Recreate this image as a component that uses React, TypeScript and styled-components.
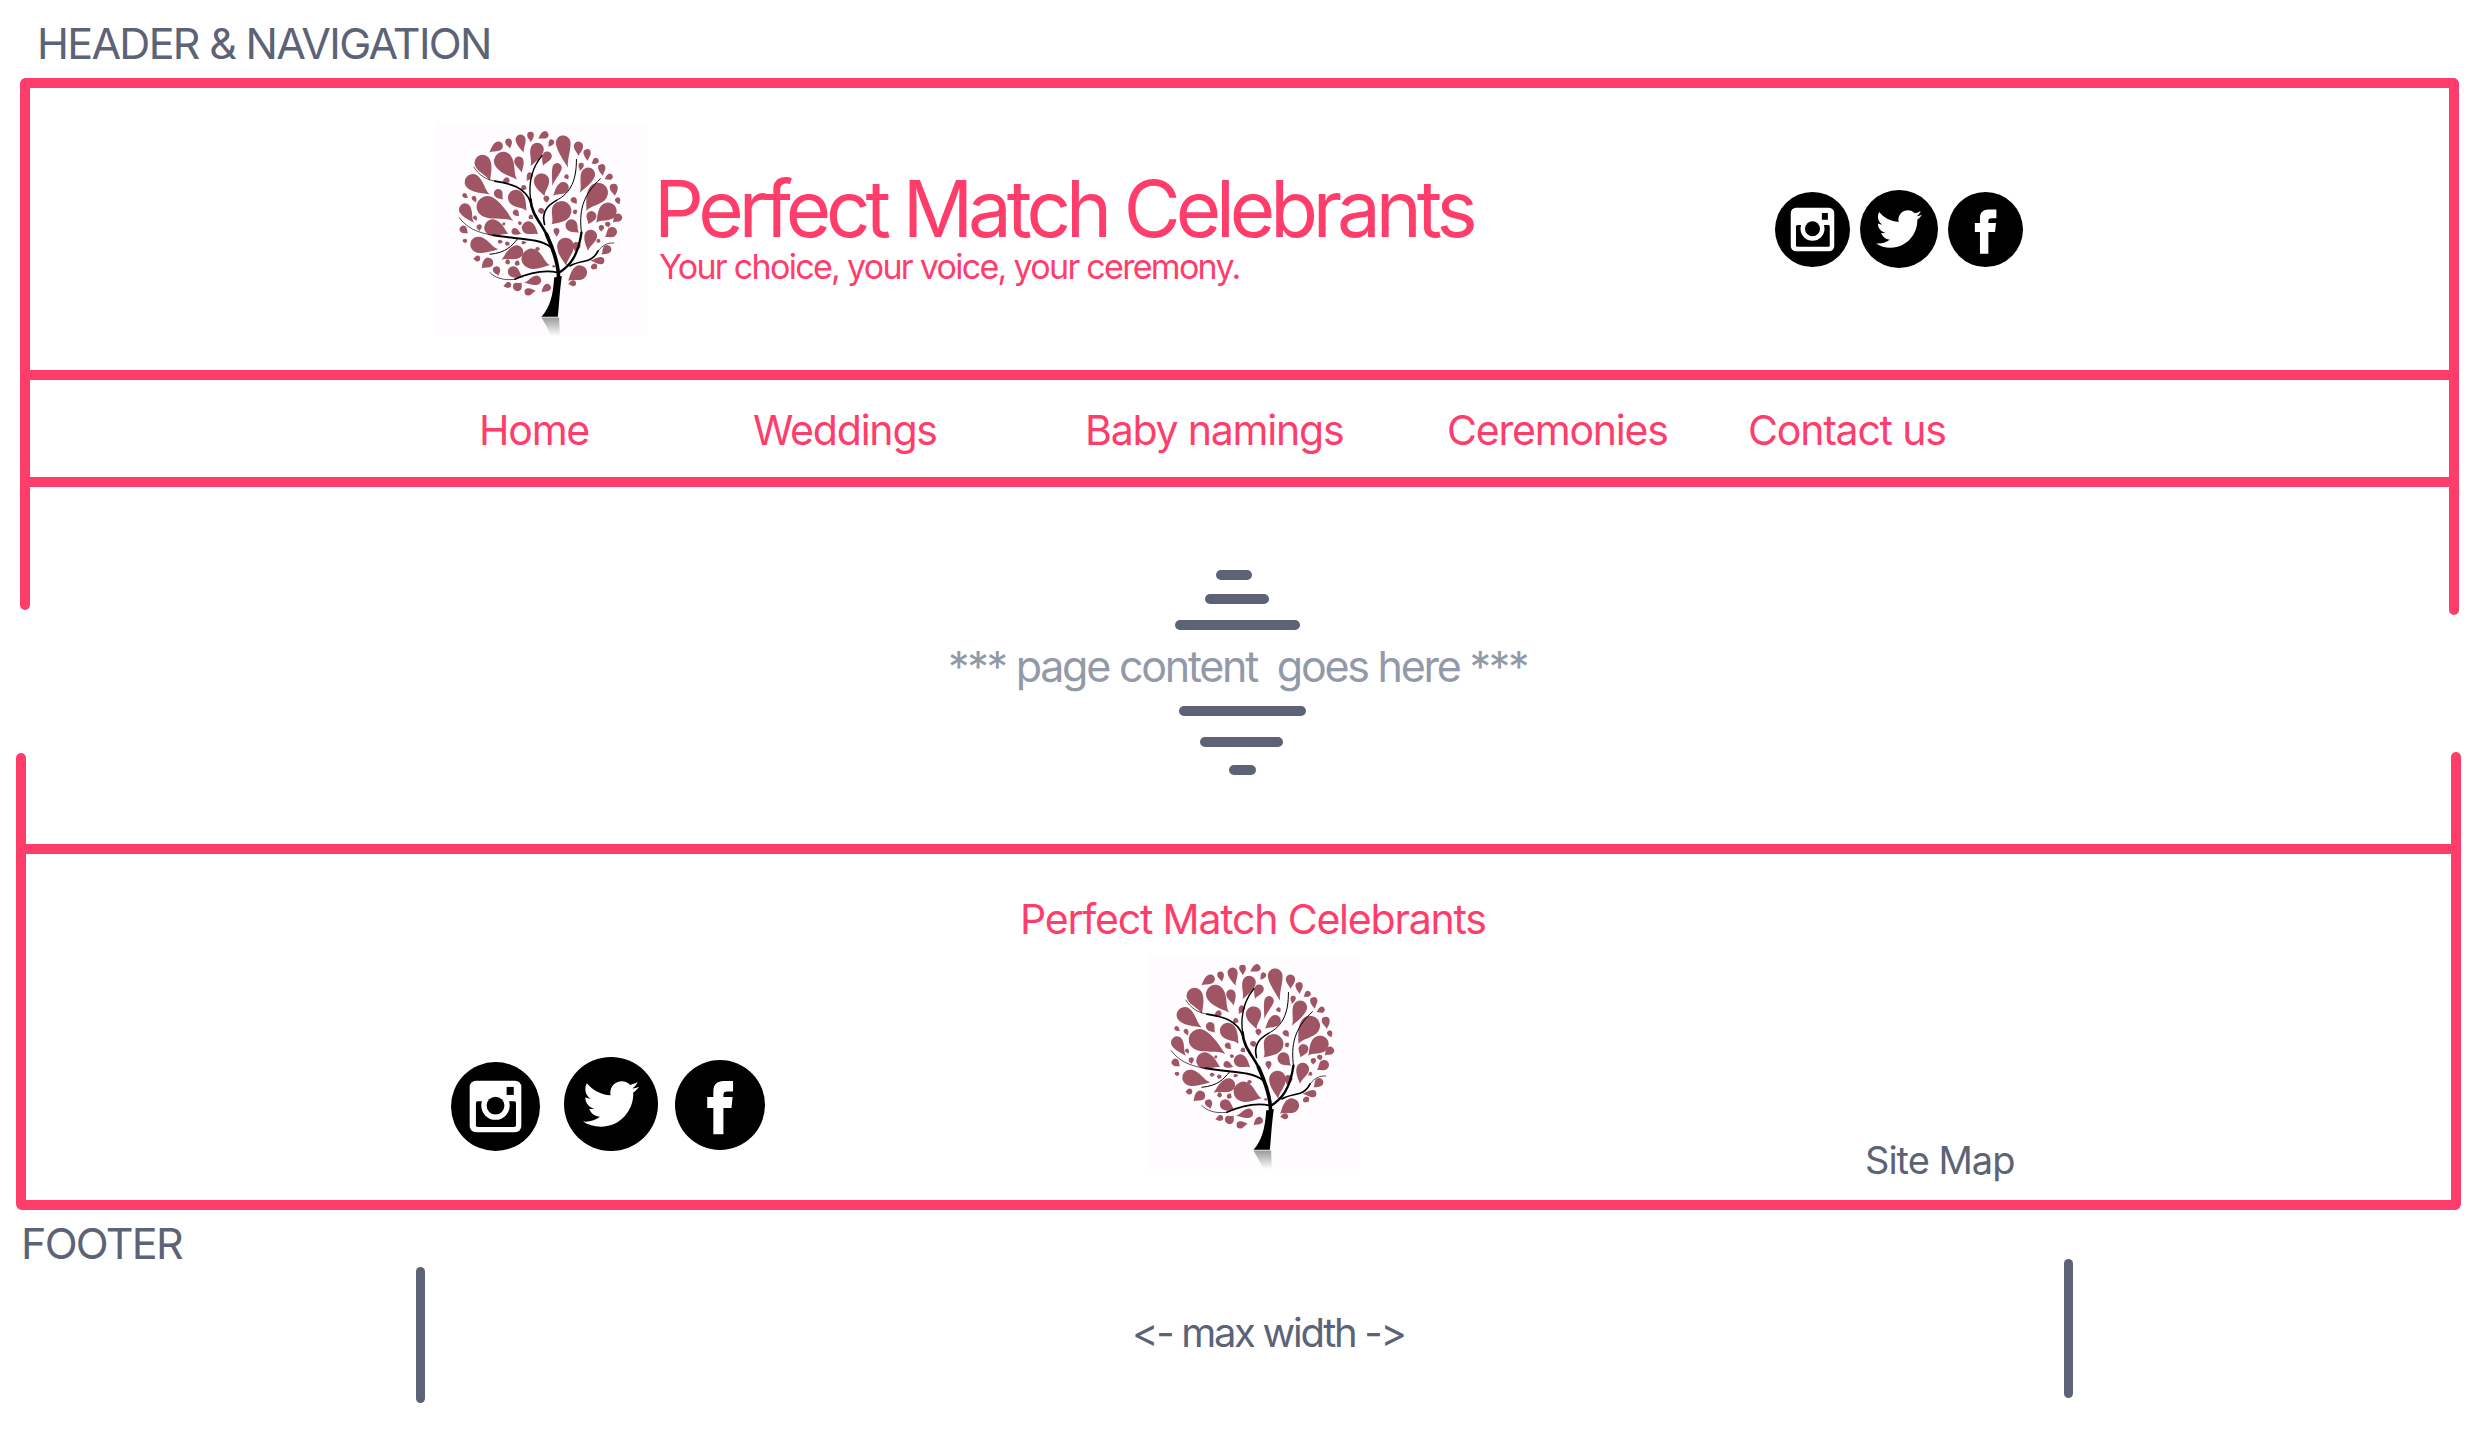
import React from "react";
import styled, { createGlobalStyle } from "styled-components";
import { FaTwitter } from "react-icons/fa";

const RED = "#ff3d6b";
const SLATE = "#5c6376";
const FONT = `Inter, "Liberation Sans", sans-serif`;

const Global = createGlobalStyle`
  html, body { margin: 0; padding: 0; background: #fff; }
  * { box-sizing: border-box; }
`;

const Page = styled.div`
  width: 2480px;
  height: 1438px;
  overflow: hidden;
  background: #fff;
  font-family: ${FONT};
`;

const SectionLabel = styled.div<{ $left: number; $height: number; $top: number }>`
  height: ${(p) => p.$height}px;
  padding: ${(p) => p.$top}px 0 0 ${(p) => p.$left}px;
  color: ${SLATE};
  font-size: 43px;
  line-height: 32px;
  letter-spacing: -1.7px;
`;

const HeaderFrame = styled.header`
  margin-left: 20px;
  width: 2439px;
  border: 10px solid ${RED};
  border-bottom: 0;
  border-radius: 6px 6px 0 0;
`;

const BrandRow = styled.div`
  height: 292px;
  display: flex;
  align-items: center;
  padding-left: 405px;
  border-bottom: 10px solid ${RED};
`;

const LogoBox = styled.div`
  width: 213px;
  height: 214px;
  flex: none;
  background: #fefcfe;
  svg { display: block; width: 100%; height: 100%; }
`;

const BrandText = styled.div`
  width: 1121px;
  margin: 3px 0 0 6px;
  flex: none;
`;

const BrandTitle = styled.h1`
  margin: 0;
  color: ${RED};
  font-size: 78px;
  font-weight: 400;
  line-height: 70px;
  letter-spacing: -5.1px;
  white-space: nowrap;
`;

const Tagline = styled.p`
  margin: 3px 0 0 5px;
  color: ${RED};
  font-size: 34px;
  line-height: 40px;
  letter-spacing: -1.7px;
  white-space: nowrap;
`;

const SocialRow = styled.div`
  display: flex;
  align-items: center;
`;

const Badge = styled.span<{ $size: number; $shift: number; $before: number }>`
  width: ${(p) => p.$size}px;
  height: ${(p) => p.$size}px;
  margin: ${(p) => p.$shift}px 0 0 ${(p) => p.$before}px;
  flex: none;
  display: flex;
  align-items: center;
  justify-content: center;
  border-radius: 50%;
  background: #000;
  color: #fff;
  svg { display: block; }
`;

const NavRow = styled.nav`
  height: 107px;
  display: grid;
  grid-template-columns: 274px 332px 362px 301px auto;
  align-items: center;
  padding: 2px 0 0 449px;
  border-bottom: 10px solid ${RED};
`;

const NavLink = styled.a`
  color: ${RED};
  font-size: 41px;
  line-height: 50px;
  letter-spacing: -1.2px;
`;

const Middle = styled.div`
  height: 357px;
  display: flex;
  justify-content: space-between;
`;

const EdgeColumn = styled.div<{ $margin: string }>`
  width: 10px;
  margin: ${(p) => p.$margin};
  display: flex;
  flex-direction: column;
  justify-content: space-between;
`;

const RedStub = styled.div<{ $height: number; $nudge: number; $round: "top" | "bottom" }>`
  width: 10px;
  height: ${(p) => p.$height}px;
  margin-left: ${(p) => p.$nudge}px;
  background: ${RED};
  border-radius: ${(p) => (p.$round === "bottom" ? "0 0 5px 5px" : "5px 5px 0 0")};
`;

const Center = styled.main`
  flex: 1;
  padding-top: 83px;
`;

const Dash = styled.div<{ $left: number; $width: number; $top: number }>`
  width: ${(p) => p.$width}px;
  height: 10px;
  margin: ${(p) => p.$top}px 0 0 ${(p) => p.$left - 26}px;
  background: ${SLATE};
  border-radius: 5px;
`;

const Placeholder = styled.div`
  margin: 9px 0 13px 922px;
  color: #929aa9;
  font-size: 43px;
  line-height: 54px;
  letter-spacing: -2.25px;
  white-space: pre;
`;

const FooterFrame = styled.footer`
  margin-left: 16px;
  width: 2445px;
  height: 366px;
  border: 10px solid ${RED};
  border-radius: 0 0 6px 6px;
`;

const FooterTitle = styled.div`
  margin-left: 994px;
  padding-top: 40px;
  color: ${RED};
  font-size: 41px;
  line-height: 50px;
  letter-spacing: -1.2px;
`;

const FooterRow = styled.div`
  display: flex;
  align-items: flex-start;
  padding-left: 425px;
  margin-top: 11px;
`;

const FooterSocialSlot = styled.div`
  margin-top: 102px;
  width: 696px;
  flex: none;
`;

const SiteMap = styled.a`
  margin: 182px 0 0 505px;
  color: ${SLATE};
  font-size: 38px;
  line-height: 46px;
  letter-spacing: -1px;
`;

const MeasureRow = styled.div`
  display: flex;
  align-items: flex-start;
  height: 150px;
`;

const MeasureBar = styled.div<{ $left: number; $top: number; $height: number }>`
  flex: none;
  width: 9px;
  height: ${(p) => p.$height}px;
  margin: ${(p) => p.$top}px 0 0 ${(p) => p.$left}px;
  background: ${SLATE};
  border-radius: 5px;
`;

const MeasureText = styled.div`
  flex: none;
  width: 270px;
  margin: 49px 0 0 707px;
  color: ${SLATE};
  font-size: 40px;
  line-height: 50px;
  letter-spacing: -2.3px;
  white-space: nowrap;
`;

const drops: number[][] = [
  [392,128,392,107,10],[415,118,435,106,11],[445,142,455,128,8],[268,160,295,140,14],[330,148,326,127,10],
  [372,160,362,120,15],[392,200,412,150,20],[505,205,490,130,22],[535,170,536,140,14],[565,185,562,160,11],
  [575,192,588,184,9],[610,230,606,205,11],[540,215,544,198,8],[352,240,310,185,28],[365,220,357,185,14],
  [430,200,442,170,14],[270,245,248,190,24],[458,260,472,205,14],[540,280,565,225,21],[615,240,630,232,9],
  [305,250,320,243,9],[435,290,425,245,23],[380,245,390,228,9],[460,290,490,265,17],[505,240,500,232,7],
  [270,285,218,248,24],[645,290,642,265,12],[560,335,595,280,30],[380,335,348,295,24],[310,300,295,282,13],
  [380,270,372,265,8],[442,310,440,298,9],[530,315,522,302,9],[205,295,194,288,7],[228,310,222,296,7],
  [660,315,654,302,8],[340,365,262,322,32],[222,370,195,330,18],[455,375,485,335,30],[358,350,348,340,9],
  [425,345,424,335,9],[530,345,526,338,7],[400,360,393,353,7],[590,370,625,335,26],[565,375,575,350,15],
  [640,370,655,355,12],[230,365,225,355,6],[240,395,238,383,8],[325,405,278,385,25],[538,400,515,378,18],
  [358,378,360,372,6],[315,378,312,374,5],[415,405,385,385,19],[365,403,345,396,10],[470,412,470,395,9],
  [605,397,605,385,8],[625,385,624,375,8],[205,402,190,390,11],[615,412,637,398,15],[565,455,573,410,19],
  [195,432,195,425,7],[295,450,235,436,24],[310,428,300,427,6],[320,440,322,434,7],[380,430,370,430,5],
  [500,500,497,440,25],[525,458,530,440,12],[590,430,596,425,6],[605,465,622,450,13],[305,482,350,458,20],
  [220,478,232,478,9],[450,497,395,478,30],[413,455,413,450,7],[245,508,265,490,15],[315,490,322,488,8],
  [360,495,353,492,8],[295,530,290,512,11],[572,485,603,484,11],[462,497,462,500,5],[370,535,340,517,16],
  [590,510,584,503,10],[505,545,540,520,22],[372,550,410,543,14],[505,555,520,552,9],[310,560,325,557,9],
  [365,550,353,562,14],[408,575,385,578,11],[425,580,442,565,11],
];

const dropPath = ([tx, ty, cx, cy, r]: number[], index: number) => {
  const dx = cx - tx;
  const dy = cy - ty;
  const d = Math.hypot(dx, dy) || 1;
  const ux = dx / d;
  const uy = dy / d;
  const bend = index % 2 === 0 ? 1 : -1;
  const px = -uy;
  const py = ux;
  const ax = cx + px * r;
  const ay = cy + py * r;
  const bx = cx - px * r;
  const by = cy - py * r;
  const back = Math.min(r, d * 0.4);
  const lead = d * 0.3;
  const outer = r * (0.2 + 0.2 * bend);
  const inner = r * (0.2 - 0.2 * bend);
  return [
    `M${tx} ${ty}`,
    `C${tx + ux * lead + px * outer} ${ty + uy * lead + py * outer} ${ax - ux * back} ${ay - uy * back} ${ax} ${ay}`,
    `A${r} ${r} 0 0 0 ${bx} ${by}`,
    `C${bx - ux * back} ${by - uy * back} ${tx + ux * lead - px * inner} ${ty + uy * lead - py * inner} ${tx} ${ty}Z`,
  ].join("");
};

const TreeLogo: React.FC<{ id: string }> = ({ id }) => (
  <svg viewBox="105 68 640 642" aria-hidden="true">
    <defs>
      <linearGradient id={id} x1="0" y1="0" x2="0" y2="1">
        <stop offset="0" stopColor="#9a9a9a" />
        <stop offset="1" stopColor="#fefcfe" />
      </linearGradient>
    </defs>
    {drops.map((d, i) => (
      <path key={i} d={dropPath(d, i)} fill="#9f5563" />
    ))}
    <path d="M425 653C450 625 460 590 463 535L486 530C478 590 478 620 474 653Z" fill="#000" />
    <path d="M425 655H478L480 710H455Z" fill={`url(#${id})`} />
    <g fill="none" stroke="#000" strokeLinecap="round">
      <path strokeWidth="11" d="M476 540C478 500 465 460 440 405" />
      <path strokeWidth="8" d="M440 405C420 365 395 345 392 300" />
      <path strokeWidth="4" d="M392 300C386 250 395 205 427 168" />
      <path strokeWidth="5" d="M393 310C375 262 330 252 285 245" />
      <path strokeWidth="2" d="M285 245C255 240 235 225 222 203" />
      <path strokeWidth="5" d="M434 375C425 340 440 320 470 303" />
      <path strokeWidth="3" d="M470 303C515 280 530 240 530 180" />
      <path strokeWidth="7" d="M478 520C510 500 535 470 545 400" />
      <path strokeWidth="3" d="M545 400C538 340 545 290 602 238" />
      <path strokeWidth="6" d="M455 445C420 415 350 420 280 408" />
      <path strokeWidth="2" d="M280 408C230 400 200 385 178 355" />
      <path strokeWidth="3" d="M352 420C335 440 320 460 270 465" />
      <path strokeWidth="5" d="M475 520C430 510 390 520 345 540" />
      <path strokeWidth="2" d="M345 540C310 545 285 535 270 520" />
      <path strokeWidth="5" d="M510 500C545 480 575 495 595 455" />
      <path strokeWidth="2" d="M595 455C610 435 625 430 642 431" />
    </g>
  </svg>
);

const InstagramGlyph: React.FC<{ size: number }> = ({ size }) => (
  <svg width={size} height={size} viewBox="0 0 100 100" aria-hidden="true">
    <rect x="21" y="21" width="58" height="58" rx="7" fill="#fff" />
    <rect x="28" y="44" width="45" height="29" rx="2" fill="#000" />
    <circle cx="50" cy="49" r="16" fill="#fff" />
    <circle cx="50" cy="49" r="10" fill="#000" />
    <rect x="62.5" y="28" width="8" height="9" fill="#000" />
  </svg>
);

const FacebookGlyph: React.FC<{ size: number }> = ({ size }) => (
  <svg width={size} height={size} viewBox="0 0 100 100" aria-hidden="true">
    <path
      d="M42.6 82.4V53.3H35.8V41.2H42.6V35C42.6 27 47 23.3 54 23.3H64.5V35H58C55 35 53.8 36 53.8 39V41.2H64L62.7 53.3H53.8V82.4Z"
      fill="#fff"
    />
  </svg>
);

type Triple = [number, number, number];

const Socials: React.FC<{ sizes: Triple; before: Triple; shifts: Triple; bird: number }> = ({
  sizes,
  before,
  shifts,
  bird,
}) => (
  <SocialRow>
    <Badge $size={sizes[0]} $shift={shifts[0]} $before={before[0]}>
      <InstagramGlyph size={sizes[0]} />
    </Badge>
    <Badge $size={sizes[1]} $shift={shifts[1]} $before={before[1]}>
      <FaTwitter size={bird} />
    </Badge>
    <Badge $size={sizes[2]} $shift={shifts[2]} $before={before[2]}>
      <FacebookGlyph size={sizes[2]} />
    </Badge>
  </SocialRow>
);

const navItems = ["Home", "Weddings", "Baby namings", "Ceremonies", "Contact us"];

export default function App() {
  return (
    <Page>
      <Global />
      <SectionLabel $left={37} $height={78} $top={27}>
        HEADER &amp; NAVIGATION
      </SectionLabel>
      <HeaderFrame>
        <BrandRow>
          <LogoBox>
            <TreeLogo id="reflect-top" />
          </LogoBox>
          <BrandText>
            <BrandTitle>Perfect Match Celebrants</BrandTitle>
            <Tagline>Your choice, your voice, your ceremony.</Tagline>
          </BrandText>
          <Socials sizes={[75, 78, 75]} before={[0, 10, 10]} shifts={[0, 0, 0]} bird={46} />
        </BrandRow>
        <NavRow>
          {navItems.map((item) => (
            <NavLink key={item}>{item}</NavLink>
          ))}
        </NavRow>
      </HeaderFrame>
      <Middle>
        <EdgeColumn $margin="0 0 0 16px">
          <RedStub $height={123} $nudge={4} $round="bottom" />
          <RedStub $height={91} $nudge={0} $round="top" />
        </EdgeColumn>
        <Center>
          <Dash $left={1216} $width={36} $top={0} />
          <Dash $left={1205} $width={64} $top={14} />
          <Dash $left={1175} $width={125} $top={16} />
          <Placeholder>{"*** page content  goes here ***"}</Placeholder>
          <Dash $left={1179} $width={127} $top={0} />
          <Dash $left={1200} $width={83} $top={21} />
          <Dash $left={1229} $width={27} $top={18} />
        </Center>
        <EdgeColumn $margin="0 19px 0 0">
          <RedStub $height={128} $nudge={-2} $round="bottom" />
          <RedStub $height={92} $nudge={0} $round="top" />
        </EdgeColumn>
      </Middle>
      <FooterFrame>
        <FooterTitle>Perfect Match Celebrants</FooterTitle>
        <FooterRow>
          <FooterSocialSlot>
            <Socials sizes={[89, 94, 90]} before={[0, 24, 17]} shifts={[4, 0, 1]} bird={56} />
          </FooterSocialSlot>
          <LogoBox>
            <TreeLogo id="reflect-bottom" />
          </LogoBox>
          <SiteMap>Site Map</SiteMap>
        </FooterRow>
      </FooterFrame>
      <SectionLabel $left={21} $height={49} $top={17}>
        FOOTER
      </SectionLabel>
      <MeasureRow>
        <MeasureBar $left={416} $top={8} $height={136} />
        <MeasureText>&lt;- max width -&gt;</MeasureText>
        <MeasureBar $left={662} $top={0} $height={139} />
      </MeasureRow>
    </Page>
  );
}
